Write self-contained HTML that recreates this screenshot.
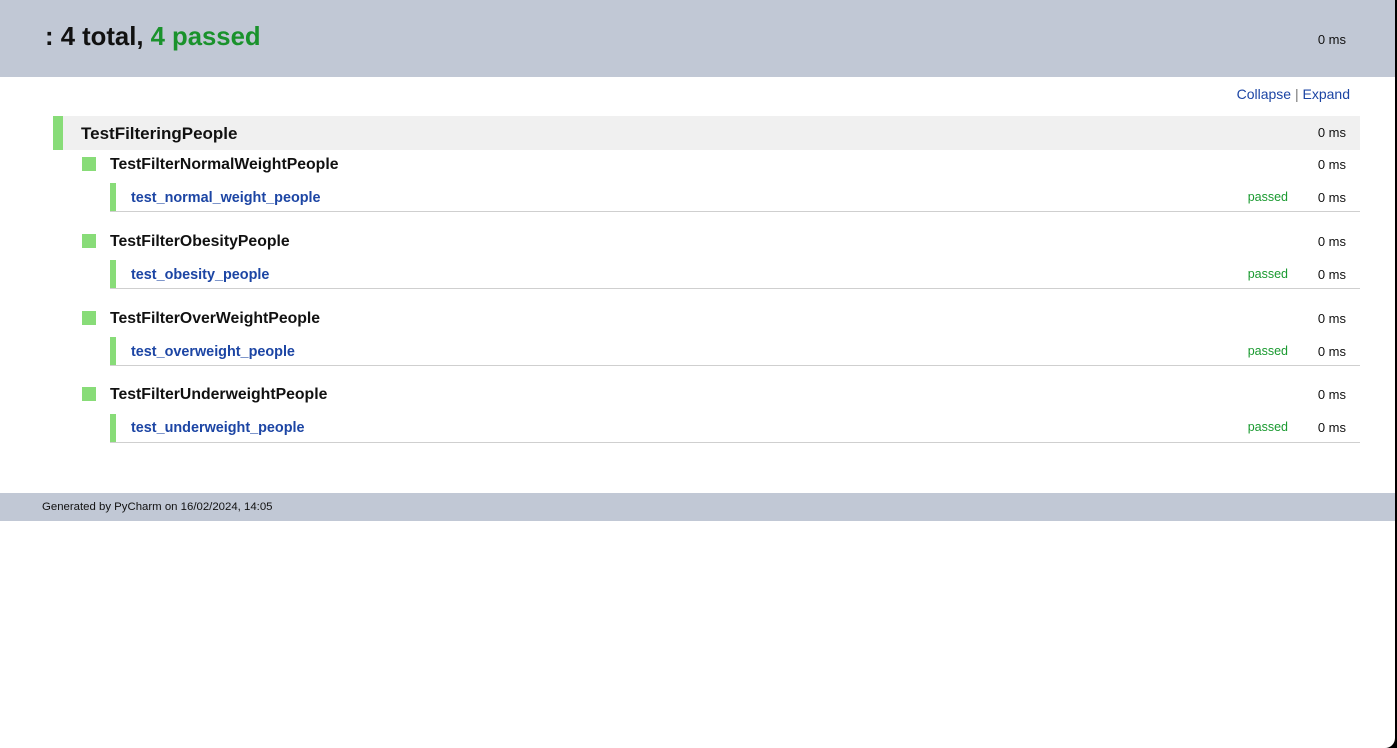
<!DOCTYPE html>
<html><head><meta charset="utf-8"><style>
*{margin:0;padding:0;box-sizing:border-box}
html,body{width:1397px;height:748px;overflow:hidden;background:#000}
#w{position:absolute;left:0;top:0;width:1395px;height:748px;background:#fff;border-bottom-right-radius:10px;overflow:hidden;font-family:"Liberation Sans",Arial,sans-serif}
.a{position:absolute;white-space:nowrap;line-height:1}
.ms{font-size:13px;color:#111;right:49px}
.bar{position:absolute;background:#88dc78}
.line{position:absolute;left:110px;width:1250px;height:1px;background:#cfcfcf}
.cls{font-size:15.8px;font-weight:bold;color:#111;left:110px}
.tst{font-size:14.4px;font-weight:bold;color:#1c45a4;left:131px}
.ps{font-size:12.5px;color:#1a9a30;right:107px}
</style></head><body><div id="w">
<div style="position:absolute;left:0;top:0;width:1397px;height:77px;background:#c1c8d5"></div>
<div class="a" style="left:45px;top:25px;font-size:25.7px;font-weight:bold;color:#111">: 4 total, <span style="color:#1a922c">4 passed</span></div>
<div class="a ms" style="top:33px">0 ms</div>
<div class="a" style="right:45px;top:87px;font-size:14px;color:#1c45a4">Collapse <span style="color:#777">|</span> Expand</div>
<div style="position:absolute;left:53px;top:116px;width:1307px;height:34px;background:#f0f0f0"></div>
<div class="bar" style="left:53px;top:116px;width:10px;height:34px"></div>
<div class="a" style="left:81px;top:125px;font-size:17px;font-weight:bold;color:#111">TestFilteringPeople</div>
<div class="a ms" style="top:126px">0 ms</div>

<div class="bar" style="left:82px;top:157px;width:14px;height:14px"></div>
<div class="a cls" style="top:157px">TestFilterNormalWeightPeople</div>
<div class="a ms" style="top:158px">0 ms</div>
<div class="bar" style="left:110px;top:183px;width:6px;height:28px"></div>
<div class="a tst" style="top:191px">test_normal_weight_people</div>
<div class="a ps" style="top:191px">passed</div>
<div class="a ms" style="top:191px">0 ms</div>
<div class="line" style="top:211px"></div>

<div class="bar" style="left:82px;top:234px;width:14px;height:14px"></div>
<div class="a cls" style="top:234px">TestFilterObesityPeople</div>
<div class="a ms" style="top:235px">0 ms</div>
<div class="bar" style="left:110px;top:260px;width:6px;height:28px"></div>
<div class="a tst" style="top:268px">test_obesity_people</div>
<div class="a ps" style="top:268px">passed</div>
<div class="a ms" style="top:268px">0 ms</div>
<div class="line" style="top:288px"></div>

<div class="bar" style="left:82px;top:311px;width:14px;height:14px"></div>
<div class="a cls" style="top:311px">TestFilterOverWeightPeople</div>
<div class="a ms" style="top:312px">0 ms</div>
<div class="bar" style="left:110px;top:337px;width:6px;height:28px"></div>
<div class="a tst" style="top:345px">test_overweight_people</div>
<div class="a ps" style="top:345px">passed</div>
<div class="a ms" style="top:345px">0 ms</div>
<div class="line" style="top:365px"></div>

<div class="bar" style="left:82px;top:387px;width:14px;height:14px"></div>
<div class="a cls" style="top:387px">TestFilterUnderweightPeople</div>
<div class="a ms" style="top:388px">0 ms</div>
<div class="bar" style="left:110px;top:414px;width:6px;height:28px"></div>
<div class="a tst" style="top:421px">test_underweight_people</div>
<div class="a ps" style="top:421px">passed</div>
<div class="a ms" style="top:421px">0 ms</div>
<div class="line" style="top:442px"></div>

<div style="position:absolute;left:0;top:493px;width:1397px;height:28px;background:#c1c8d5"></div>
<div class="a" style="left:42px;top:502px;font-size:11.4px;color:#111">Generated by PyCharm on 16/02/2024, 14:05</div>
</div></body></html>
